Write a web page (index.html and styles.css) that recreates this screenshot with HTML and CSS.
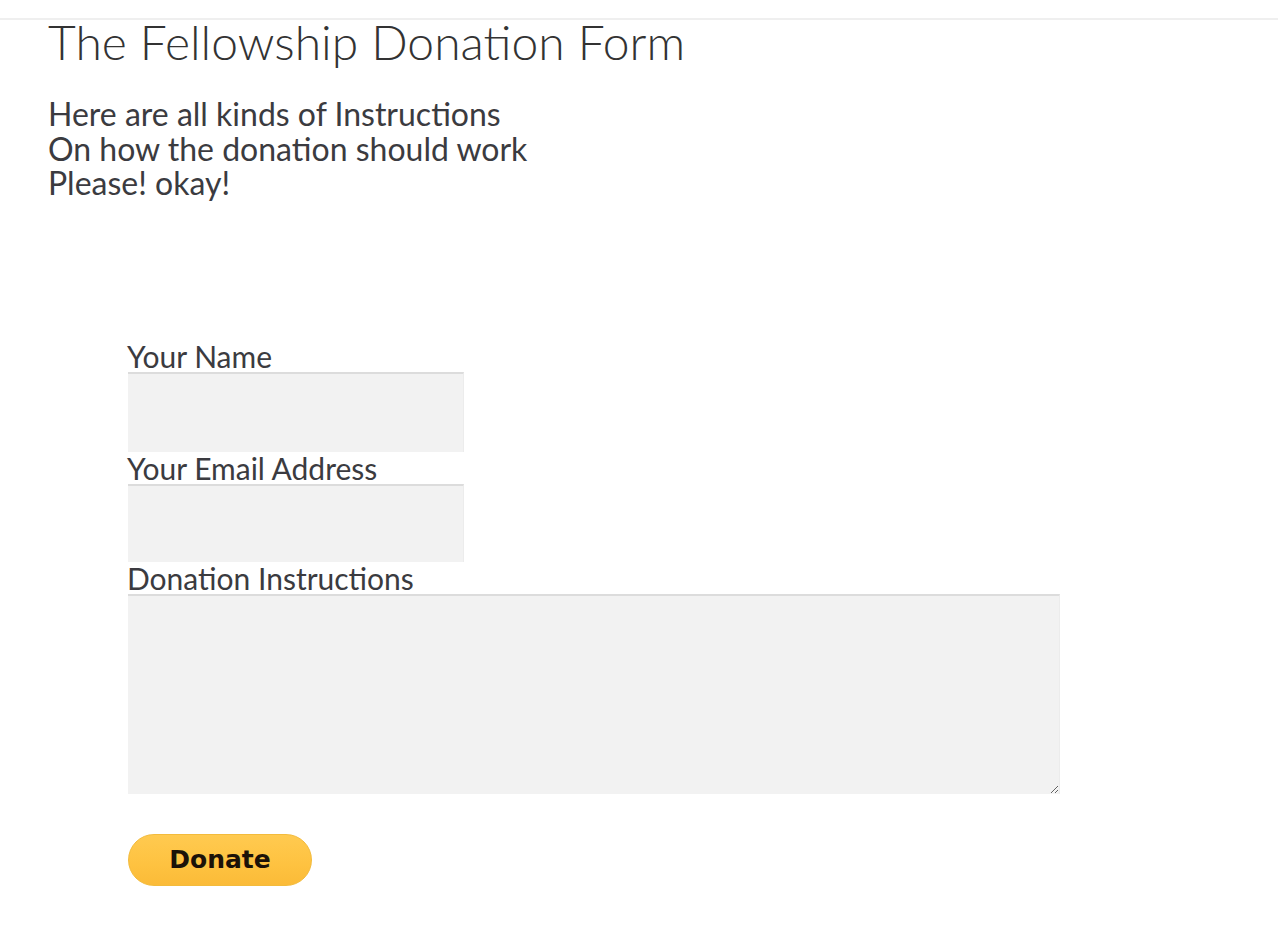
FILE: index.html
```html
<!DOCTYPE html>
<html lang="en">
<head>
<meta charset="utf-8">
<title>The Fellowship Donation Form</title>
<link rel="stylesheet" href="styles.css">
</head>
<body>
<header class="topbar"></header>
<main class="page">
  <h1 class="title">The Fellowship Donation Form</h1>
  <p class="intro">Here are all kinds of Instructions<br>On how the donation should work<br>Please! okay!</p>
  <form class="donate-form">
    <label class="field-label" for="name">Your Name</label>
    <input class="field-input" id="name" type="text">
    <label class="field-label" for="email">Your Email Address</label>
    <input class="field-input field-input--short" id="email" type="email">
    <label class="field-label" for="notes">Donation Instructions</label>
    <textarea class="field-area" id="notes"></textarea>
    <button class="donate-btn" type="button">Donate</button>
  </form>
</main>
</body>
</html>
```
FILE: styles.css
```css
html, body {
  margin: 0;
  padding: 0;
  background: #ffffff;
}
body {
  font-family: Lato, "Open Sans", sans-serif;
  color: #3b3b40;
}
.topbar {
  height: 18px;
  border-bottom: 2px solid #efefef;
}
.page {
  padding: 0 0 40px 48px;
}
.title {
  margin: 0;
  font-weight: 300;
  font-size: 48px;
  line-height: 44px;
  color: #333333;
}
.intro {
  margin: 33px 0 0 0;
  font-size: 32px;
  line-height: 34.5px;
}
.donate-form {
  display: flex;
  flex-direction: column;
  align-items: flex-start;
  margin: 139px 0 0 80px;
}
.field-label {
  font-size: 30px;
  line-height: 32px;
  margin-left: -1px;
}
.field-input,
.field-area {
  box-sizing: border-box;
  margin: 0;
  border: 0;
  border-top: 2px solid #dcdcdc;
  border-right: 1px solid #ececec;
  background: #f2f2f2;
  font: inherit;
  outline: none;
}
.field-input {
  width: 336px;
  height: 80px;
}
.field-input--short {
  height: 78px;
}
.field-area {
  width: 932px;
  height: 200px;
  resize: both;
}
.donate-btn {
  margin-top: 40px;
  width: 184px;
  height: 52px;
  border-radius: 26px;
  border: 1px solid #f3bb3c;
  background: linear-gradient(#ffca50, #fec240 60%, #fbbb38);
  font-family: "DejaVu Sans", Verdana, sans-serif;
  font-weight: bold;
  font-size: 25px;
  color: #1c1208;
  padding: 0;
  cursor: pointer;
}
```
